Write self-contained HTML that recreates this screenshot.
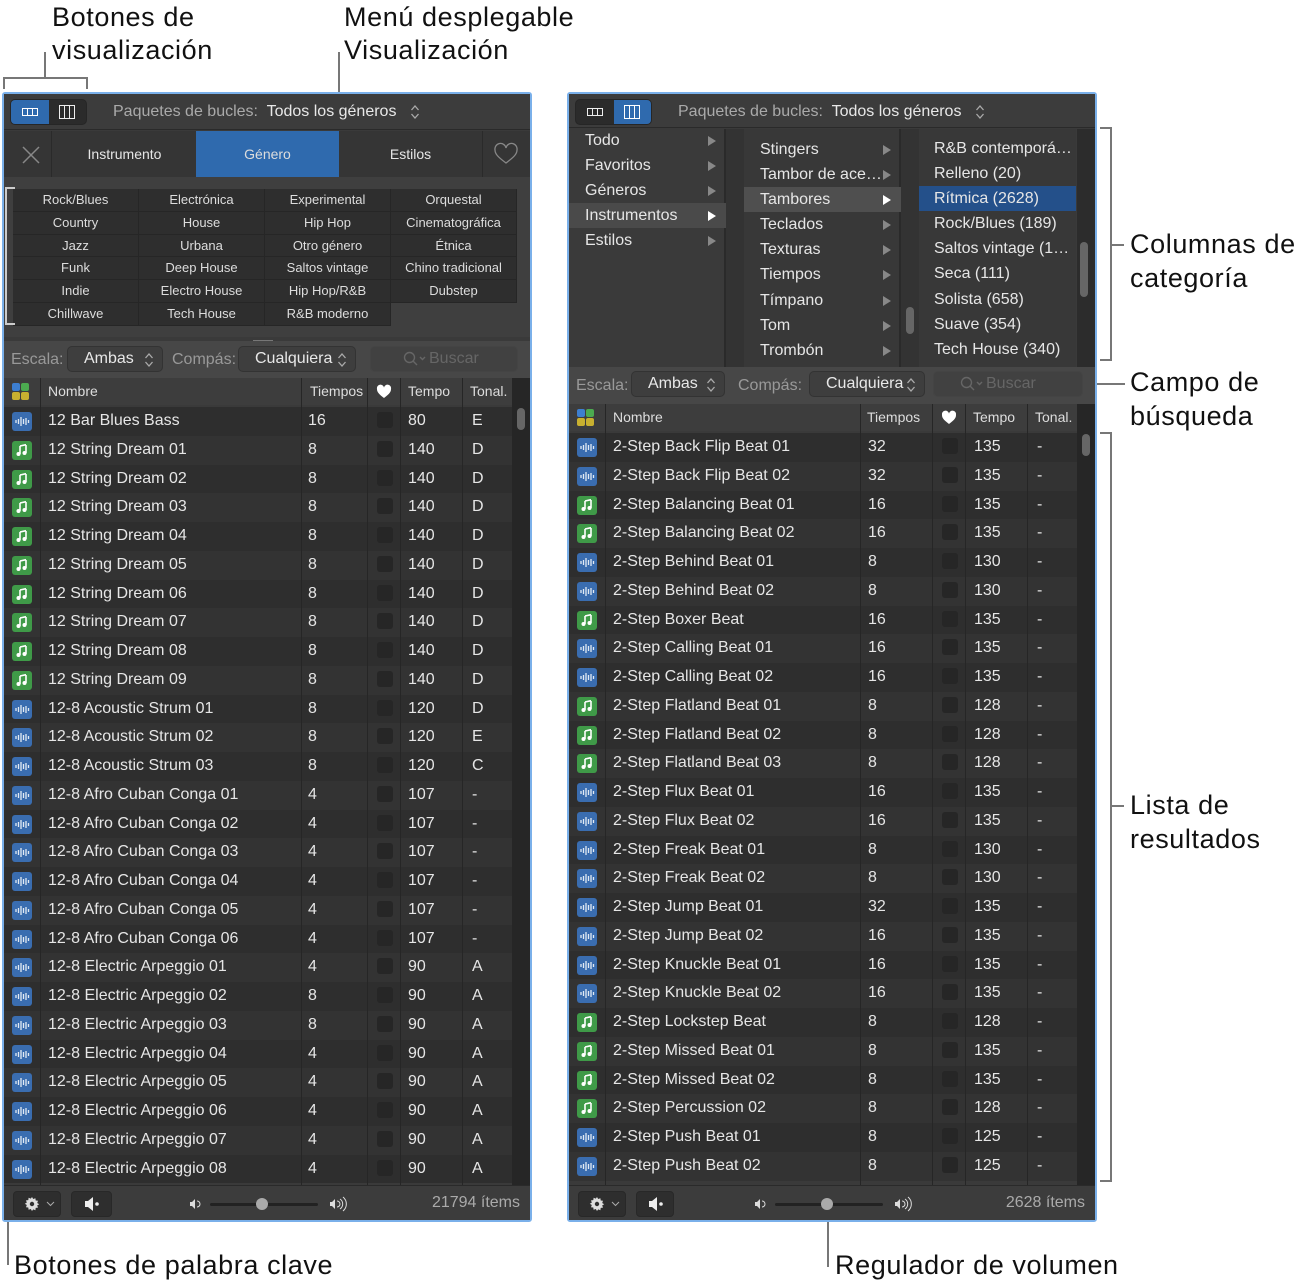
<!DOCTYPE html><html><head><meta charset="utf-8"><style>
*{box-sizing:border-box;margin:0;padding:0}
body{width:1309px;height:1287px;background:#fff;position:relative;overflow:hidden;font-family:"Liberation Sans",sans-serif;color:#e6e6e6}
.a{position:absolute}
.ann{position:absolute;color:#111;font-size:27px;line-height:34px;white-space:nowrap;letter-spacing:.6px}
.ln{position:absolute;background:#777}
.panel{position:absolute;border:2px solid #7ab0ea;background:#3a3a3a;border-radius:3px}
.bar{position:absolute;background:#3c3c3c;border-bottom:1px solid #2a2a2a}
.seg{position:absolute;height:26px;border-radius:5px;background:#2b2b2b;border:1px solid #262626;display:flex;overflow:hidden}
.seg div{width:38px;display:flex;align-items:center;justify-content:center}
.seg .on{background:#2f6aae}
.tt{position:absolute;font-size:16px;color:#aaa;white-space:nowrap}
.tt b{font-weight:normal;color:#e8e8e8}
.ud{display:inline-block;vertical-align:middle}
.rows{position:absolute}
.r{height:28.75px;position:relative;font-size:16px;line-height:28.75px;white-space:nowrap}
.r:nth-child(odd){background:#2e2e2e}.r:nth-child(even){background:#333}
.r>span{position:absolute;top:0}
.ic{position:absolute;top:5px;width:20px;height:19px;border-radius:3px}
.w{background:#3a6db0}.n{background:#3f9a48}
.cb{position:absolute;top:5px;width:16px;height:16px;border-radius:3px;background:#262626}
.vl{position:absolute;width:1px;background:#262626}
.hd{position:absolute;background:#3d3d3d;font-size:14px;color:#ddd;line-height:26px}
.hd span{position:absolute}
.flt{position:absolute;background:#474747;font-size:16px;color:#999}
.pop{position:absolute;top:5px;height:26px;border:1px solid #333;border-radius:5px;background:#3e3e3e;color:#e8e8e8;padding-left:16px;line-height:24px}
.pop svg{position:absolute;right:8px;top:5px}
.srch{position:absolute;top:5px;height:26px;border:1px solid #444;border-radius:5px;background:#414141;color:#666;line-height:24px}
.foot{position:absolute;background:#3c3c3c;border-top:1px solid #2a2a2a}
.btn{position:absolute;top:5px;height:26px;border-radius:4px;background:#2e2e2e;border:1px solid #282828}
.sb{position:absolute;background:#262626}
.thumb{position:absolute;width:8px;border-radius:4px;background:#666}
.gr{position:absolute;display:grid;grid-template-columns:126px 126px 126px 126px;grid-auto-rows:22.8px;font-size:13px;color:#ddd}
.gr div{background:#2e2e2e;text-align:center;line-height:22px;border-right:1px solid #262626;border-bottom:1px solid #262626}
.col{position:absolute;font-size:16px;color:#e6e6e6}
.col div{height:25.1px;line-height:25.1px;position:relative;padding-left:16px;white-space:nowrap}
.col div i{position:absolute;right:10px;top:8px;width:0;height:0;border-left:8px solid #888;border-top:5px solid transparent;border-bottom:5px solid transparent}
</style></head><body>
<svg width="0" height="0" style="position:absolute"><defs>
<symbol id="wv" viewBox="0 0 20 19"><g stroke="#fff" stroke-width="1.3" opacity=".85"><path d="M4 8v3M6.5 7v5M9 5v9M11.5 7v5M14 6v7M16.5 8v3"/></g></symbol>
<symbol id="nt" viewBox="0 0 20 19"><path d="M8 5v8M14 4v8M8 5l6-1.3" stroke="#fff" stroke-width="1.6" fill="none"/><circle cx="6.5" cy="13" r="2" fill="#fff"/><circle cx="12.5" cy="12" r="2" fill="#fff"/></symbol>
<symbol id="ud" viewBox="0 0 10 16"><path d="M1.5 6l3.5-4 3.5 4M1.5 10l3.5 4 3.5-4" stroke="#aaa" stroke-width="1.3" fill="none"/></symbol>
<symbol id="gear" viewBox="0 0 16 16"><path d="M8 1l1.2 2 2.2-.8.3 2.3 2.3.3-.8 2.2 2 1.2-2 1.2.8 2.2-2.3.3-.3 2.3-2.2-.8L8 15l-1.2-2-2.2.8-.3-2.3-2.3-.3.8-2.2-2-1.2 2-1.2-.8-2.2 2.3-.3.3-2.3 2.2.8z" fill="#ddd"/><circle cx="8" cy="8" r="2.2" fill="#2e2e2e"/></symbol>
<symbol id="mag" viewBox="0 0 30 16"><circle cx="6.5" cy="6.5" r="5" stroke="#666" stroke-width="1.4" fill="none"/><path d="M10 10l4 4M17 6l2.5 2.5L22 6" stroke="#666" stroke-width="1.4" fill="none"/></symbol>
</defs></svg>

<div class="ann" style="left:52px;top:0">Botones de</div>
<div class="ann" style="left:52px;top:33px">visualización</div>
<div class="ann" style="left:344px;top:0">Menú desplegable</div>
<div class="ann" style="left:344px;top:33px">Visualización</div>
<div class="ln" style="left:44px;top:52px;width:2px;height:25px"></div>
<div class="ln" style="left:3px;top:77px;width:85px;height:2px"></div>
<div class="ln" style="left:3px;top:77px;width:2px;height:12px"></div>
<div class="ln" style="left:86px;top:77px;width:2px;height:12px"></div>
<div class="ln" style="left:338px;top:52px;width:2px;height:42px"></div>
<div class="ann" style="left:14px;top:1248px">Botones de palabra clave</div>
<div class="ln" style="left:7px;top:325px;width:2px;height:940px"></div>
<div class="ann" style="left:835px;top:1248px">Regulador de volumen</div>
<div class="ln" style="left:827px;top:1205px;width:2px;height:62px"></div>
<div class="ann" style="left:1130px;top:227px">Columnas de</div>
<div class="ann" style="left:1130px;top:261px">categoría</div>
<div class="ann" style="left:1130px;top:365px">Campo de</div>
<div class="ann" style="left:1130px;top:399px">búsqueda</div>
<div class="ann" style="left:1130px;top:788px">Lista de</div>
<div class="ann" style="left:1130px;top:822px">resultados</div>
<div class="ln" style="left:1100px;top:127px;width:12px;height:2px"></div>
<div class="ln" style="left:1110px;top:127px;width:2px;height:234px"></div>
<div class="ln" style="left:1100px;top:359px;width:12px;height:2px"></div>
<div class="ln" style="left:1110px;top:244px;width:14px;height:2px"></div>
<div class="ln" style="left:1085px;top:383px;width:40px;height:2px"></div>
<div class="ln" style="left:1100px;top:432px;width:12px;height:2px"></div>
<div class="ln" style="left:1110px;top:432px;width:2px;height:750px"></div>
<div class="ln" style="left:1100px;top:1180px;width:12px;height:2px"></div>
<div class="ln" style="left:1110px;top:805px;width:14px;height:2px"></div>

<!-- LEFT PANEL -->
<div class="panel" style="left:2px;top:92px;width:530px;height:1130px"></div>
<div class="bar" style="left:4px;top:94px;width:526px;height:36px"></div>
<div class="seg" style="left:10px;top:99px;width:77px"><div class="on"><svg width="16" height="8"><rect x=".5" y=".5" width="15" height="7" fill="none" stroke="#fff"/><path d="M5.5 1v6M10.5 1v6" stroke="#fff"/></svg></div><div><svg width="16" height="14"><rect x=".5" y=".5" width="15" height="13" fill="none" stroke="#eee"/><path d="M5.5 1v12M10.5 1v12" stroke="#eee"/></svg></div></div>
<div class="tt" style="left:113px;top:103px">Paquetes de bucles:&nbsp; <b>Todos los géneros</b> &nbsp;&nbsp;<svg class="ud" width="10" height="16"><use href="#ud"/></svg></div>
<div class="a" style="left:4px;top:131px;width:526px;height:46px;background:#353535"></div>
<div class="a" style="left:4px;top:131px;width:48px;height:46px;border-right:1px solid #2a2a2a"><svg width="48" height="46"><path d="M19 16l16 16M35 16L19 32" stroke="#888" stroke-width="1.5"/></svg></div>
<div class="a" style="left:53px;top:131px;width:143px;height:46px;line-height:46px;text-align:center;font-size:14px">Instrumento</div>
<div class="a" style="left:196px;top:131px;width:143px;height:46px;line-height:46px;text-align:center;font-size:14px;background:#2f6aae;color:#ddd">Género</div>
<div class="a" style="left:339px;top:131px;width:143px;height:46px;line-height:46px;text-align:center;font-size:14px">Estilos</div>
<div class="a" style="left:482px;top:131px;width:48px;height:46px;border-left:1px solid #2a2a2a"><svg width="48" height="46"><path d="M23 32c-8-6-11-9-11-13a4.5 4.5 0 0 1 11-2 4.5 4.5 0 0 1 11 2c0 4-3 7-11 13z" fill="none" stroke="#888" stroke-width="1.3"/></svg></div>
<div class="a" style="left:4px;top:177px;width:526px;height:160px;background:#3f3f3f"></div>
<div class="gr" style="left:13px;top:189px">
<div>Rock/Blues</div><div>Electrónica</div><div>Experimental</div><div>Orquestal</div>
<div>Country</div><div>House</div><div>Hip Hop</div><div>Cinematográfica</div>
<div>Jazz</div><div>Urbana</div><div>Otro género</div><div>Étnica</div>
<div>Funk</div><div>Deep House</div><div>Saltos vintage</div><div>Chino tradicional</div>
<div>Indie</div><div>Electro House</div><div>Hip Hop/R&amp;B</div><div>Dubstep</div>
<div>Chillwave</div><div>Tech House</div><div>R&amp;B moderno</div>
</div>
<div class="ln" style="left:5px;top:187px;width:2px;height:138px;background:#ccc"></div>
<div class="ln" style="left:5px;top:187px;width:10px;height:2px;background:#ccc"></div>
<div class="ln" style="left:5px;top:323px;width:10px;height:2px;background:#ccc"></div>
<div class="a" style="left:253px;top:340px;width:20px;height:1px;background:#777"></div>
<div class="flt" style="left:4px;top:341px;width:526px;height:37px">
<span class="a" style="left:7px;top:10px">Escala:</span>
<div class="pop" style="left:63px;width:96px">Ambas<svg width="10" height="16"><use href="#ud"/></svg></div>
<span class="a" style="left:168px;top:10px">Compás:</span>
<div class="pop" style="left:234px;width:118px">Cualquiera<svg width="10" height="16"><use href="#ud"/></svg></div>
<div class="srch" style="left:366px;width:148px;padding-left:58px"><svg class="a" style="left:32px;top:4px" width="30" height="16"><use href="#mag"/></svg>Buscar</div>
</div>
<div class="hd" style="left:4px;top:378px;width:526px;height:27px">
<svg class="a" style="left:8px;top:5px" width="17" height="17"><rect width="8" height="8" rx="2" fill="#3d7fd0"/><rect x="9" width="8" height="8" rx="2" fill="#4caa50"/><rect y="9" width="8" height="8" rx="2" fill="#c8b030"/><rect x="9" y="9" width="8" height="8" rx="2" fill="#c8b030"/></svg>
<span style="left:44px">Nombre</span><span style="left:306px">Tiempos</span><svg class="a" style="left:372px;top:6px" width="16" height="15"><path d="M8 14C2 9.5 1 7.5 1 5a3.5 3.5 0 0 1 7-1.5A3.5 3.5 0 0 1 15 5c0 2.5-1 4.5-7 9z" fill="#fff"/></svg><span style="left:404px">Tempo</span><span style="left:466px">Tonal.</span>
</div>
<div class="sb" style="left:512px;top:378px;width:18px;height:807px"></div>
<div class="thumb" style="left:517px;top:408px;height:22px"></div>
<div class="rows" style="left:4px;top:407px;width:508px">
<div class="r"><div class="ic w" style="left:8px"><svg width="20" height="19"><use href="#wv"/></svg></div><span style="left:44px">12 Bar Blues Bass</span><span style="left:304px">16</span><i class="cb" style="left:373px"></i><span style="left:404px">80</span><span style="left:468px">E</span></div>
<div class="r"><div class="ic n" style="left:8px"><svg width="20" height="19"><use href="#nt"/></svg></div><span style="left:44px">12 String Dream 01</span><span style="left:304px">8</span><i class="cb" style="left:373px"></i><span style="left:404px">140</span><span style="left:468px">D</span></div>
<div class="r"><div class="ic n" style="left:8px"><svg width="20" height="19"><use href="#nt"/></svg></div><span style="left:44px">12 String Dream 02</span><span style="left:304px">8</span><i class="cb" style="left:373px"></i><span style="left:404px">140</span><span style="left:468px">D</span></div>
<div class="r"><div class="ic n" style="left:8px"><svg width="20" height="19"><use href="#nt"/></svg></div><span style="left:44px">12 String Dream 03</span><span style="left:304px">8</span><i class="cb" style="left:373px"></i><span style="left:404px">140</span><span style="left:468px">D</span></div>
<div class="r"><div class="ic n" style="left:8px"><svg width="20" height="19"><use href="#nt"/></svg></div><span style="left:44px">12 String Dream 04</span><span style="left:304px">8</span><i class="cb" style="left:373px"></i><span style="left:404px">140</span><span style="left:468px">D</span></div>
<div class="r"><div class="ic n" style="left:8px"><svg width="20" height="19"><use href="#nt"/></svg></div><span style="left:44px">12 String Dream 05</span><span style="left:304px">8</span><i class="cb" style="left:373px"></i><span style="left:404px">140</span><span style="left:468px">D</span></div>
<div class="r"><div class="ic n" style="left:8px"><svg width="20" height="19"><use href="#nt"/></svg></div><span style="left:44px">12 String Dream 06</span><span style="left:304px">8</span><i class="cb" style="left:373px"></i><span style="left:404px">140</span><span style="left:468px">D</span></div>
<div class="r"><div class="ic n" style="left:8px"><svg width="20" height="19"><use href="#nt"/></svg></div><span style="left:44px">12 String Dream 07</span><span style="left:304px">8</span><i class="cb" style="left:373px"></i><span style="left:404px">140</span><span style="left:468px">D</span></div>
<div class="r"><div class="ic n" style="left:8px"><svg width="20" height="19"><use href="#nt"/></svg></div><span style="left:44px">12 String Dream 08</span><span style="left:304px">8</span><i class="cb" style="left:373px"></i><span style="left:404px">140</span><span style="left:468px">D</span></div>
<div class="r"><div class="ic n" style="left:8px"><svg width="20" height="19"><use href="#nt"/></svg></div><span style="left:44px">12 String Dream 09</span><span style="left:304px">8</span><i class="cb" style="left:373px"></i><span style="left:404px">140</span><span style="left:468px">D</span></div>
<div class="r"><div class="ic w" style="left:8px"><svg width="20" height="19"><use href="#wv"/></svg></div><span style="left:44px">12-8 Acoustic Strum 01</span><span style="left:304px">8</span><i class="cb" style="left:373px"></i><span style="left:404px">120</span><span style="left:468px">D</span></div>
<div class="r"><div class="ic w" style="left:8px"><svg width="20" height="19"><use href="#wv"/></svg></div><span style="left:44px">12-8 Acoustic Strum 02</span><span style="left:304px">8</span><i class="cb" style="left:373px"></i><span style="left:404px">120</span><span style="left:468px">E</span></div>
<div class="r"><div class="ic w" style="left:8px"><svg width="20" height="19"><use href="#wv"/></svg></div><span style="left:44px">12-8 Acoustic Strum 03</span><span style="left:304px">8</span><i class="cb" style="left:373px"></i><span style="left:404px">120</span><span style="left:468px">C</span></div>
<div class="r"><div class="ic w" style="left:8px"><svg width="20" height="19"><use href="#wv"/></svg></div><span style="left:44px">12-8 Afro Cuban Conga 01</span><span style="left:304px">4</span><i class="cb" style="left:373px"></i><span style="left:404px">107</span><span style="left:468px">-</span></div>
<div class="r"><div class="ic w" style="left:8px"><svg width="20" height="19"><use href="#wv"/></svg></div><span style="left:44px">12-8 Afro Cuban Conga 02</span><span style="left:304px">4</span><i class="cb" style="left:373px"></i><span style="left:404px">107</span><span style="left:468px">-</span></div>
<div class="r"><div class="ic w" style="left:8px"><svg width="20" height="19"><use href="#wv"/></svg></div><span style="left:44px">12-8 Afro Cuban Conga 03</span><span style="left:304px">4</span><i class="cb" style="left:373px"></i><span style="left:404px">107</span><span style="left:468px">-</span></div>
<div class="r"><div class="ic w" style="left:8px"><svg width="20" height="19"><use href="#wv"/></svg></div><span style="left:44px">12-8 Afro Cuban Conga 04</span><span style="left:304px">4</span><i class="cb" style="left:373px"></i><span style="left:404px">107</span><span style="left:468px">-</span></div>
<div class="r"><div class="ic w" style="left:8px"><svg width="20" height="19"><use href="#wv"/></svg></div><span style="left:44px">12-8 Afro Cuban Conga 05</span><span style="left:304px">4</span><i class="cb" style="left:373px"></i><span style="left:404px">107</span><span style="left:468px">-</span></div>
<div class="r"><div class="ic w" style="left:8px"><svg width="20" height="19"><use href="#wv"/></svg></div><span style="left:44px">12-8 Afro Cuban Conga 06</span><span style="left:304px">4</span><i class="cb" style="left:373px"></i><span style="left:404px">107</span><span style="left:468px">-</span></div>
<div class="r"><div class="ic w" style="left:8px"><svg width="20" height="19"><use href="#wv"/></svg></div><span style="left:44px">12-8 Electric Arpeggio 01</span><span style="left:304px">4</span><i class="cb" style="left:373px"></i><span style="left:404px">90</span><span style="left:468px">A</span></div>
<div class="r"><div class="ic w" style="left:8px"><svg width="20" height="19"><use href="#wv"/></svg></div><span style="left:44px">12-8 Electric Arpeggio 02</span><span style="left:304px">8</span><i class="cb" style="left:373px"></i><span style="left:404px">90</span><span style="left:468px">A</span></div>
<div class="r"><div class="ic w" style="left:8px"><svg width="20" height="19"><use href="#wv"/></svg></div><span style="left:44px">12-8 Electric Arpeggio 03</span><span style="left:304px">8</span><i class="cb" style="left:373px"></i><span style="left:404px">90</span><span style="left:468px">A</span></div>
<div class="r"><div class="ic w" style="left:8px"><svg width="20" height="19"><use href="#wv"/></svg></div><span style="left:44px">12-8 Electric Arpeggio 04</span><span style="left:304px">4</span><i class="cb" style="left:373px"></i><span style="left:404px">90</span><span style="left:468px">A</span></div>
<div class="r"><div class="ic w" style="left:8px"><svg width="20" height="19"><use href="#wv"/></svg></div><span style="left:44px">12-8 Electric Arpeggio 05</span><span style="left:304px">4</span><i class="cb" style="left:373px"></i><span style="left:404px">90</span><span style="left:468px">A</span></div>
<div class="r"><div class="ic w" style="left:8px"><svg width="20" height="19"><use href="#wv"/></svg></div><span style="left:44px">12-8 Electric Arpeggio 06</span><span style="left:304px">4</span><i class="cb" style="left:373px"></i><span style="left:404px">90</span><span style="left:468px">A</span></div>
<div class="r"><div class="ic w" style="left:8px"><svg width="20" height="19"><use href="#wv"/></svg></div><span style="left:44px">12-8 Electric Arpeggio 07</span><span style="left:304px">4</span><i class="cb" style="left:373px"></i><span style="left:404px">90</span><span style="left:468px">A</span></div>
<div class="r"><div class="ic w" style="left:8px"><svg width="20" height="19"><use href="#wv"/></svg></div><span style="left:44px">12-8 Electric Arpeggio 08</span><span style="left:304px">4</span><i class="cb" style="left:373px"></i><span style="left:404px">90</span><span style="left:468px">A</span></div>
</div>
<div class="vl" style="left:40px;top:378px;height:807px"></div><div class="vl" style="left:301px;top:378px;height:807px"></div><div class="vl" style="left:367px;top:378px;height:807px"></div><div class="vl" style="left:400px;top:378px;height:807px"></div><div class="vl" style="left:462px;top:378px;height:807px"></div>
<div class="foot" style="left:4px;top:1185px;width:526px;height:35px">
<div class="btn" style="left:9px;width:48px"><svg class="a" style="left:10px;top:4px" width="16" height="16"><use href="#gear"/></svg><svg class="a" style="left:32px;top:9px" width="9" height="6"><path d="M1 1l3.5 3.5L8 1" stroke="#aaa" fill="none"/></svg></div>
<div class="btn" style="left:67px;width:41px"><svg width="41" height="24"><path d="M13 9h3l5-4v14l-5-4h-3z" fill="#eee"/><circle cx="25" cy="12" r="1.8" fill="#eee"/></svg></div>
<svg class="a" style="left:184px;top:8px" width="170" height="20"><path d="M2 8h2l3-3v10l-3-3H2z" fill="#ddd"/><path d="M9 7a3 3 0 0 1 0 6" stroke="#ddd" fill="none"/><rect x="22" y="9" width="108" height="3" rx="1.5" fill="#222"/><circle cx="74" cy="10" r="6" fill="#aaa"/><path d="M142 8h2l3-3v10l-3-3h-2z" fill="#ddd"/><path d="M149 7a3 3 0 0 1 0 6M152 5a6 6 0 0 1 0 10M155 3a9 9 0 0 1 0 14" stroke="#ddd" fill="none"/></svg>
<span class="a" style="right:10px;top:8px;font-size:16px;color:#aaa">21794 ítems</span>
</div>

<!-- RIGHT PANEL -->
<div class="panel" style="left:567px;top:92px;width:530px;height:1130px"></div>
<div class="bar" style="left:569px;top:94px;width:526px;height:34px"></div>
<div class="seg" style="left:575px;top:99px;width:77px"><div><svg width="16" height="8"><rect x=".5" y=".5" width="15" height="7" fill="none" stroke="#eee"/><path d="M5.5 1v6M10.5 1v6" stroke="#eee"/></svg></div><div class="on"><svg width="16" height="14"><rect x=".5" y=".5" width="15" height="13" fill="none" stroke="#fff"/><path d="M5.5 1v12M10.5 1v12" stroke="#fff"/></svg></div></div>
<div class="tt" style="left:678px;top:103px">Paquetes de bucles:&nbsp; <b>Todos los géneros</b> &nbsp;&nbsp;<svg class="ud" width="10" height="16"><use href="#ud"/></svg></div>
<div class="a" style="left:569px;top:129px;width:157px;height:238px;background:#3a3a3a;border-right:2px solid #2a2a2a"></div>
<div class="a" style="left:726px;top:129px;width:18px;height:238px;background:#333"></div>
<div class="a" style="left:744px;top:129px;width:157px;height:238px;background:#383838;border-right:2px solid #2a2a2a"></div>
<div class="a" style="left:901px;top:129px;width:18px;height:238px;background:#333"></div>
<div class="thumb" style="left:906px;top:307px;height:27px"></div>
<div class="a" style="left:919px;top:129px;width:157px;height:238px;background:#383838"></div>
<div class="sb" style="left:1077px;top:129px;width:18px;height:238px;background:#2c2c2c"></div>
<div class="thumb" style="left:1080px;top:242px;height:55px"></div>
<div class="col" style="left:569px;top:128px;width:157px">
<div>Todo<i></i></div><div>Favoritos<i></i></div><div>Géneros<i></i></div><div style="background:#4a4a4a">Instrumentos<i style="border-left-color:#fff"></i></div><div>Estilos<i></i></div></div>
<div class="col" style="left:744px;top:137px;width:157px">
<div>Stingers<i></i></div><div>Tambor de ace…<i></i></div><div style="background:#4f4f4f">Tambores<i style="border-left-color:#fff"></i></div><div>Teclados<i></i></div><div>Texturas<i></i></div><div>Tiempos<i></i></div><div>Tímpano<i></i></div><div>Tom<i></i></div><div>Trombón<i></i></div></div>
<div class="col" style="left:919px;top:136px;width:157px">
<div style="padding-left:15px">R&amp;B contemporá…</div><div style="padding-left:15px">Relleno (20)</div><div style="padding-left:15px;background:#24508a">Rítmica (2628)</div><div style="padding-left:15px">Rock/Blues (189)</div><div style="padding-left:15px">Saltos vintage (1…</div><div style="padding-left:15px">Seca (111)</div><div style="padding-left:15px">Solista (658)</div><div style="padding-left:15px">Suave (354)</div><div style="padding-left:15px">Tech House (340)</div></div>
<div class="flt" style="left:569px;top:367px;width:526px;height:37px">
<span class="a" style="left:7px;top:10px">Escala:</span>
<div class="pop" style="left:62px;width:94px;top:4px">Ambas<svg width="10" height="16"><use href="#ud"/></svg></div>
<span class="a" style="left:169px;top:10px">Compás:</span>
<div class="pop" style="left:240px;width:116px;top:4px">Cualquiera<svg width="10" height="16"><use href="#ud"/></svg></div>
<div class="srch" style="left:364px;width:150px;padding-left:52px;top:4px"><svg class="a" style="left:26px;top:4px" width="30" height="16"><use href="#mag"/></svg>Buscar</div>
</div>
<div class="hd" style="left:569px;top:404px;width:526px;height:27px">
<svg class="a" style="left:8px;top:5px" width="17" height="17"><rect width="8" height="8" rx="2" fill="#3d7fd0"/><rect x="9" width="8" height="8" rx="2" fill="#4caa50"/><rect y="9" width="8" height="8" rx="2" fill="#c8b030"/><rect x="9" y="9" width="8" height="8" rx="2" fill="#c8b030"/></svg>
<span style="left:44px">Nombre</span><span style="left:298px">Tiempos</span><svg class="a" style="left:372px;top:6px" width="16" height="15"><path d="M8 14C2 9.5 1 7.5 1 5a3.5 3.5 0 0 1 7-1.5A3.5 3.5 0 0 1 15 5c0 2.5-1 4.5-7 9z" fill="#fff"/></svg><span style="left:404px">Tempo</span><span style="left:466px">Tonal.</span>
</div>
<div class="sb" style="left:1077px;top:404px;width:18px;height:781px"></div>
<div class="thumb" style="left:1082px;top:434px;height:22px"></div>
<div class="rows" style="left:569px;top:433px;width:508px">
<div class="r"><div class="ic w" style="left:8px"><svg width="20" height="19"><use href="#wv"/></svg></div><span style="left:44px">2-Step Back Flip Beat 01</span><span style="left:299px">32</span><i class="cb" style="left:373px"></i><span style="left:405px">135</span><span style="left:468px">-</span></div>
<div class="r"><div class="ic w" style="left:8px"><svg width="20" height="19"><use href="#wv"/></svg></div><span style="left:44px">2-Step Back Flip Beat 02</span><span style="left:299px">32</span><i class="cb" style="left:373px"></i><span style="left:405px">135</span><span style="left:468px">-</span></div>
<div class="r"><div class="ic n" style="left:8px"><svg width="20" height="19"><use href="#nt"/></svg></div><span style="left:44px">2-Step Balancing Beat 01</span><span style="left:299px">16</span><i class="cb" style="left:373px"></i><span style="left:405px">135</span><span style="left:468px">-</span></div>
<div class="r"><div class="ic n" style="left:8px"><svg width="20" height="19"><use href="#nt"/></svg></div><span style="left:44px">2-Step Balancing Beat 02</span><span style="left:299px">16</span><i class="cb" style="left:373px"></i><span style="left:405px">135</span><span style="left:468px">-</span></div>
<div class="r"><div class="ic w" style="left:8px"><svg width="20" height="19"><use href="#wv"/></svg></div><span style="left:44px">2-Step Behind Beat 01</span><span style="left:299px">8</span><i class="cb" style="left:373px"></i><span style="left:405px">130</span><span style="left:468px">-</span></div>
<div class="r"><div class="ic w" style="left:8px"><svg width="20" height="19"><use href="#wv"/></svg></div><span style="left:44px">2-Step Behind Beat 02</span><span style="left:299px">8</span><i class="cb" style="left:373px"></i><span style="left:405px">130</span><span style="left:468px">-</span></div>
<div class="r"><div class="ic n" style="left:8px"><svg width="20" height="19"><use href="#nt"/></svg></div><span style="left:44px">2-Step Boxer Beat</span><span style="left:299px">16</span><i class="cb" style="left:373px"></i><span style="left:405px">135</span><span style="left:468px">-</span></div>
<div class="r"><div class="ic w" style="left:8px"><svg width="20" height="19"><use href="#wv"/></svg></div><span style="left:44px">2-Step Calling Beat 01</span><span style="left:299px">16</span><i class="cb" style="left:373px"></i><span style="left:405px">135</span><span style="left:468px">-</span></div>
<div class="r"><div class="ic w" style="left:8px"><svg width="20" height="19"><use href="#wv"/></svg></div><span style="left:44px">2-Step Calling Beat 02</span><span style="left:299px">16</span><i class="cb" style="left:373px"></i><span style="left:405px">135</span><span style="left:468px">-</span></div>
<div class="r"><div class="ic n" style="left:8px"><svg width="20" height="19"><use href="#nt"/></svg></div><span style="left:44px">2-Step Flatland Beat 01</span><span style="left:299px">8</span><i class="cb" style="left:373px"></i><span style="left:405px">128</span><span style="left:468px">-</span></div>
<div class="r"><div class="ic n" style="left:8px"><svg width="20" height="19"><use href="#nt"/></svg></div><span style="left:44px">2-Step Flatland Beat 02</span><span style="left:299px">8</span><i class="cb" style="left:373px"></i><span style="left:405px">128</span><span style="left:468px">-</span></div>
<div class="r"><div class="ic n" style="left:8px"><svg width="20" height="19"><use href="#nt"/></svg></div><span style="left:44px">2-Step Flatland Beat 03</span><span style="left:299px">8</span><i class="cb" style="left:373px"></i><span style="left:405px">128</span><span style="left:468px">-</span></div>
<div class="r"><div class="ic w" style="left:8px"><svg width="20" height="19"><use href="#wv"/></svg></div><span style="left:44px">2-Step Flux Beat 01</span><span style="left:299px">16</span><i class="cb" style="left:373px"></i><span style="left:405px">135</span><span style="left:468px">-</span></div>
<div class="r"><div class="ic w" style="left:8px"><svg width="20" height="19"><use href="#wv"/></svg></div><span style="left:44px">2-Step Flux Beat 02</span><span style="left:299px">16</span><i class="cb" style="left:373px"></i><span style="left:405px">135</span><span style="left:468px">-</span></div>
<div class="r"><div class="ic w" style="left:8px"><svg width="20" height="19"><use href="#wv"/></svg></div><span style="left:44px">2-Step Freak Beat 01</span><span style="left:299px">8</span><i class="cb" style="left:373px"></i><span style="left:405px">130</span><span style="left:468px">-</span></div>
<div class="r"><div class="ic w" style="left:8px"><svg width="20" height="19"><use href="#wv"/></svg></div><span style="left:44px">2-Step Freak Beat 02</span><span style="left:299px">8</span><i class="cb" style="left:373px"></i><span style="left:405px">130</span><span style="left:468px">-</span></div>
<div class="r"><div class="ic w" style="left:8px"><svg width="20" height="19"><use href="#wv"/></svg></div><span style="left:44px">2-Step Jump Beat 01</span><span style="left:299px">32</span><i class="cb" style="left:373px"></i><span style="left:405px">135</span><span style="left:468px">-</span></div>
<div class="r"><div class="ic w" style="left:8px"><svg width="20" height="19"><use href="#wv"/></svg></div><span style="left:44px">2-Step Jump Beat 02</span><span style="left:299px">16</span><i class="cb" style="left:373px"></i><span style="left:405px">135</span><span style="left:468px">-</span></div>
<div class="r"><div class="ic w" style="left:8px"><svg width="20" height="19"><use href="#wv"/></svg></div><span style="left:44px">2-Step Knuckle Beat 01</span><span style="left:299px">16</span><i class="cb" style="left:373px"></i><span style="left:405px">135</span><span style="left:468px">-</span></div>
<div class="r"><div class="ic w" style="left:8px"><svg width="20" height="19"><use href="#wv"/></svg></div><span style="left:44px">2-Step Knuckle Beat 02</span><span style="left:299px">16</span><i class="cb" style="left:373px"></i><span style="left:405px">135</span><span style="left:468px">-</span></div>
<div class="r"><div class="ic n" style="left:8px"><svg width="20" height="19"><use href="#nt"/></svg></div><span style="left:44px">2-Step Lockstep Beat</span><span style="left:299px">8</span><i class="cb" style="left:373px"></i><span style="left:405px">128</span><span style="left:468px">-</span></div>
<div class="r"><div class="ic n" style="left:8px"><svg width="20" height="19"><use href="#nt"/></svg></div><span style="left:44px">2-Step Missed Beat 01</span><span style="left:299px">8</span><i class="cb" style="left:373px"></i><span style="left:405px">135</span><span style="left:468px">-</span></div>
<div class="r"><div class="ic n" style="left:8px"><svg width="20" height="19"><use href="#nt"/></svg></div><span style="left:44px">2-Step Missed Beat 02</span><span style="left:299px">8</span><i class="cb" style="left:373px"></i><span style="left:405px">135</span><span style="left:468px">-</span></div>
<div class="r"><div class="ic n" style="left:8px"><svg width="20" height="19"><use href="#nt"/></svg></div><span style="left:44px">2-Step Percussion 02</span><span style="left:299px">8</span><i class="cb" style="left:373px"></i><span style="left:405px">128</span><span style="left:468px">-</span></div>
<div class="r"><div class="ic w" style="left:8px"><svg width="20" height="19"><use href="#wv"/></svg></div><span style="left:44px">2-Step Push Beat 01</span><span style="left:299px">8</span><i class="cb" style="left:373px"></i><span style="left:405px">125</span><span style="left:468px">-</span></div>
<div class="r"><div class="ic w" style="left:8px"><svg width="20" height="19"><use href="#wv"/></svg></div><span style="left:44px">2-Step Push Beat 02</span><span style="left:299px">8</span><i class="cb" style="left:373px"></i><span style="left:405px">125</span><span style="left:468px">-</span></div>
</div>
<div class="vl" style="left:605px;top:404px;height:781px"></div><div class="vl" style="left:860px;top:404px;height:781px"></div><div class="vl" style="left:932px;top:404px;height:781px"></div><div class="vl" style="left:965px;top:404px;height:781px"></div><div class="vl" style="left:1027px;top:404px;height:781px"></div>
<div class="foot" style="left:569px;top:1185px;width:526px;height:35px">
<div class="btn" style="left:9px;width:48px"><svg class="a" style="left:10px;top:4px" width="16" height="16"><use href="#gear"/></svg><svg class="a" style="left:32px;top:9px" width="9" height="6"><path d="M1 1l3.5 3.5L8 1" stroke="#aaa" fill="none"/></svg></div>
<div class="btn" style="left:67px;width:38px"><svg width="38" height="24"><path d="M12 9h3l5-4v14l-5-4h-3z" fill="#eee"/><circle cx="24" cy="12" r="1.8" fill="#eee"/></svg></div>
<svg class="a" style="left:184px;top:8px" width="170" height="20"><path d="M2 8h2l3-3v10l-3-3H2z" fill="#ddd"/><path d="M9 7a3 3 0 0 1 0 6" stroke="#ddd" fill="none"/><rect x="22" y="9" width="108" height="3" rx="1.5" fill="#222"/><circle cx="74" cy="10" r="6" fill="#aaa"/><path d="M142 8h2l3-3v10l-3-3h-2z" fill="#ddd"/><path d="M149 7a3 3 0 0 1 0 6M152 5a6 6 0 0 1 0 10M155 3a9 9 0 0 1 0 14" stroke="#ddd" fill="none"/></svg>
<span class="a" style="right:10px;top:8px;font-size:16px;color:#aaa">2628 ítems</span>
</div>
</body></html>
